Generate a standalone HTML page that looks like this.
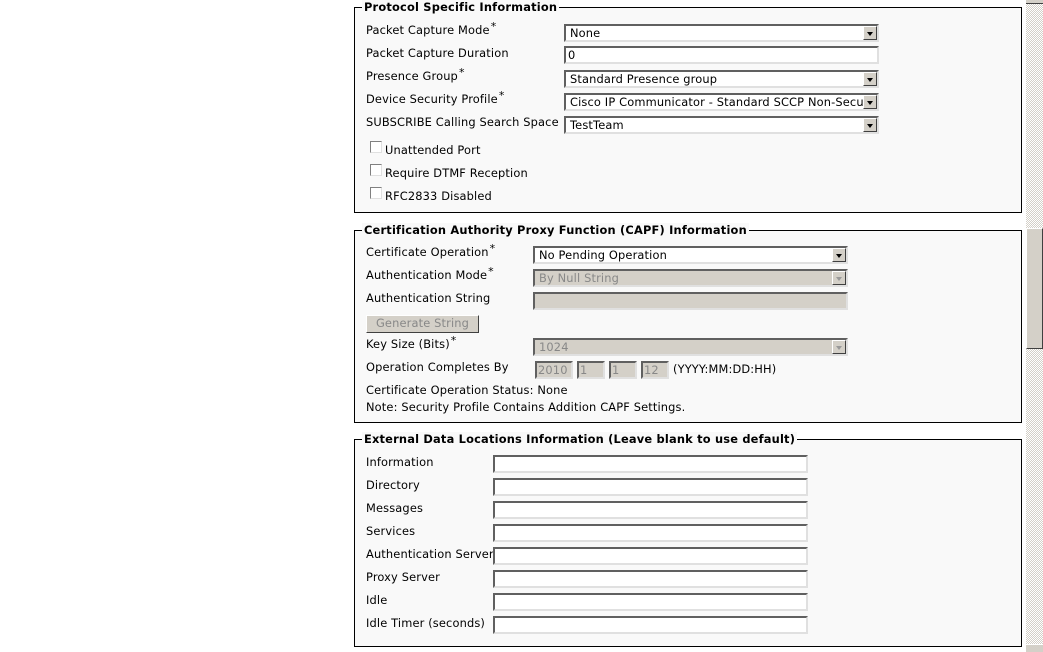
<!DOCTYPE html>
<html><head><style>
body{margin:0;width:1043px;height:652px;background:#fff;position:relative;overflow:hidden;font-family:"DejaVu Sans","Liberation Sans",sans-serif;font-size:11.4px;letter-spacing:0.15px;color:#000}
.a{position:absolute;white-space:nowrap}
.fs{position:absolute;border:1px solid #000;background:#f9f9f9;box-sizing:border-box}
.lg{position:absolute;font-weight:bold;background:#f9f9f9;padding:0 2px;top:-8px;left:7px;line-height:14px;font-size:11.4px;letter-spacing:0.2px;white-space:nowrap}
.lb{position:absolute;line-height:14px;white-space:nowrap}
.s{position:relative;top:-4px;font-size:11px;margin-left:1px}
.sel,.inp{position:absolute;box-sizing:border-box;height:18px;background:#fff;border:2px solid;border-color:#606060 #e0e0e0 #e0e0e0 #606060;line-height:14px;padding-left:4px;overflow:hidden;white-space:nowrap}
.dis{background:#d4d0c8;color:#888}
.dd{position:absolute;right:0;top:0;width:14px;height:14px;background:#d4d0c8;box-sizing:border-box;border:1px solid;border-color:#fff #404040 #404040 #fff}
.dd:after{content:"";position:absolute;left:3px;top:5px;border:3px solid transparent;border-top:4px solid #000;border-bottom:0}
.dis .dd:after{border-top-color:#999}
.cb{position:absolute;width:12px;height:12px;box-sizing:border-box;background:#fff;border:1px solid;border-color:#808080 #e0e0e0 #e0e0e0 #808080}
</style></head><body>

<div class="fs" style="left:354px;top:7px;width:668px;height:206px">
<div class="lg">Protocol Specific Information</div>
</div>
<div class="lb" style="left:366px;top:23px">Packet Capture Mode<span class="s">*</span></div>
<div class="lb" style="left:366px;top:46px">Packet Capture Duration</div>
<div class="lb" style="left:366px;top:69px">Presence Group<span class="s">*</span></div>
<div class="lb" style="left:366px;top:92px">Device Security Profile<span class="s">*</span></div>
<div class="lb" style="left:366px;top:115px">SUBSCRIBE Calling Search Space</div>
<div class="sel" style="left:564px;top:24px;width:315px">None<div class="dd"></div></div>
<div class="inp" style="left:564px;top:46px;width:315px;padding-left:2px">0</div>
<div class="sel" style="left:564px;top:70px;width:315px">Standard Presence group<div class="dd"></div></div>
<div class="sel" style="left:564px;top:93px;width:315px">Cisco IP Communicator - Standard SCCP Non-Secure<div class="dd"></div></div>
<div class="sel" style="left:564px;top:116px;width:315px">TestTeam<div class="dd"></div></div>
<div class="cb" style="left:370px;top:141px"></div><div class="lb" style="left:385px;top:143px">Unattended Port</div>
<div class="cb" style="left:370px;top:164px"></div><div class="lb" style="left:385px;top:166px">Require DTMF Reception</div>
<div class="cb" style="left:370px;top:187px"></div><div class="lb" style="left:385px;top:189px">RFC2833 Disabled</div>

<div class="fs" style="left:354px;top:230px;width:668px;height:193px">
<div class="lg">Certification Authority Proxy Function (CAPF) Information</div>
</div>
<div class="lb" style="left:366px;top:245px">Certificate Operation<span class="s">*</span></div>
<div class="lb" style="left:366px;top:268px">Authentication Mode<span class="s">*</span></div>
<div class="lb" style="left:366px;top:291px">Authentication String</div>
<div class="lb" style="left:366px;top:337px">Key Size (Bits)<span class="s">*</span></div>
<div class="lb" style="left:366px;top:360px">Operation Completes By</div>
<div class="lb" style="left:366px;top:383px">Certificate Operation Status: None</div>
<div class="lb" style="left:366px;top:400px">Note: Security Profile Contains Addition CAPF Settings.</div>
<div class="sel" style="left:533px;top:246px;width:315px">No Pending Operation<div class="dd"></div></div>
<div class="sel dis" style="left:533px;top:269px;width:315px">By Null String<div class="dd"></div></div>
<div class="inp dis" style="left:533px;top:292px;width:315px"></div>
<div class="a" style="left:366px;top:315px;width:113px;height:18px;box-sizing:border-box;background:#d4d0c8;border:1px solid;border-color:#fff #404040 #404040 #fff;color:#888;text-align:center;line-height:15px">Generate String</div>
<div class="sel dis" style="left:533px;top:338px;width:315px">1024<div class="dd"></div></div>
<div class="inp dis" style="left:535px;top:361px;width:38px;padding-left:1px">2010</div>
<div class="inp dis" style="left:577px;top:361px;width:28px;padding-left:1px">1</div>
<div class="inp dis" style="left:609px;top:361px;width:28px;padding-left:1px">1</div>
<div class="inp dis" style="left:641px;top:361px;width:28px;padding-left:1px">12</div>
<div class="lb" style="left:673px;top:362px">(YYYY:MM:DD:HH)</div>

<div class="fs" style="left:354px;top:439px;width:668px;height:208px">
<div class="lg">External Data Locations Information (Leave blank to use default)</div>
</div>
<div class="lb" style="left:366px;top:455px">Information</div>
<div class="lb" style="left:366px;top:478px">Directory</div>
<div class="lb" style="left:366px;top:501px">Messages</div>
<div class="lb" style="left:366px;top:524px">Services</div>
<div class="lb" style="left:366px;top:547px">Authentication Server</div>
<div class="lb" style="left:366px;top:570px">Proxy Server</div>
<div class="lb" style="left:366px;top:593px">Idle</div>
<div class="lb" style="left:366px;top:616px">Idle Timer (seconds)</div>
<div class="inp" style="left:493px;top:455px;width:315px"></div>
<div class="inp" style="left:493px;top:478px;width:315px"></div>
<div class="inp" style="left:493px;top:501px;width:315px"></div>
<div class="inp" style="left:493px;top:524px;width:315px"></div>
<div class="inp" style="left:493px;top:547px;width:315px"></div>
<div class="inp" style="left:493px;top:570px;width:315px"></div>
<div class="inp" style="left:493px;top:593px;width:315px"></div>
<div class="inp" style="left:493px;top:616px;width:315px"></div>

<div class="a" style="left:1026px;top:0;width:17px;height:652px;background:repeating-conic-gradient(#d4d0c8 0 25%,#fff 0 50%) 0 0/2px 2px"></div>
<div class="a" style="left:1026px;top:0;width:17px;height:4px;background:#d4d0c8;border-bottom:1px solid #404040;box-sizing:border-box"></div>
<div class="a" style="left:1026px;top:228px;width:17px;height:121px;background:#d4d0c8;box-sizing:border-box;border:1px solid;border-color:#fff #404040 #404040 #fff"></div>
<div class="a" style="left:1026px;top:644px;width:17px;height:8px;background:#d4d0c8;border-top:1px solid #fff;box-sizing:border-box"></div>
</body></html>
